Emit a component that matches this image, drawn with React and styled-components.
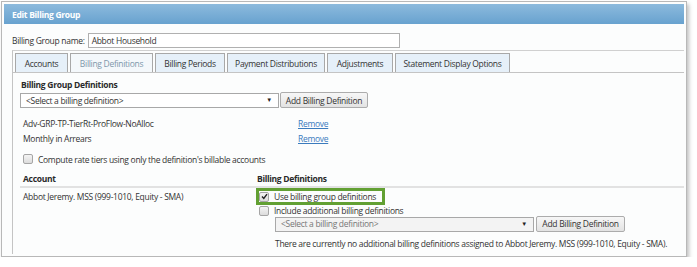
import React from 'react';
import styled, { createGlobalStyle } from 'styled-components';

const GlobalStyle = createGlobalStyle`
  body {
    margin: 0;
    background: #ffffff;
    font-family: "Open Sans", "Liberation Sans", sans-serif;
    font-size: 8.5px;
    letter-spacing: -0.3px;
    color: #333;
  }
`;

const Window = styled.div`
  margin: 1px 0 0 1px;
  width: 680px;
  height: 250px;
  padding: 2px;
  border: 1px solid #b8b8b8;
  background: #fcfdfd;
  box-shadow: 2px 3px 4px rgba(0, 0, 0, 0.25);
  display: flex;
  flex-direction: column;
  overflow: hidden;
`;

const Header = styled.div`
  flex-shrink: 0;
  height: 20px;
  display: flex;
  align-items: center;
  padding-left: 8px;
  color: #fff;
  font-weight: 700;
  background: linear-gradient(#8cbadd, #68a2cf);
`;

const Body = styled.div`
  flex: 1;
  padding: 8px 0 0 8px;
  display: flex;
  flex-direction: column;
`;

const NameRow = styled.div`
  flex-shrink: 0;
  display: flex;
  align-items: center;
  gap: 3px;
  height: 16px;
`;

const TextInput = styled.div`
  width: 307px;
  height: 13px;
  border: 1px solid #b0b0b0;
  background: #fff;
  padding-left: 3px;
  display: flex;
  align-items: center;
`;

const TabPanel = styled.div`
  margin-top: 2px;
  flex: 1;
  border-left: 1px solid #c4c4c4;
  border-top: 1px solid #d0d0d0;
  display: flex;
  flex-direction: column;
`;

const TabRow = styled.div`
  display: flex;
  gap: 2px;
  padding: 2px 0 0 2px;
  border-bottom: 1px solid #c4c4c4;
`;

const Tab = styled.div`
  width: ${p => p.$width}px;
  height: 19px;
  box-sizing: border-box;
  display: flex;
  align-items: center;
  justify-content: center;
  border: 1px solid #a8a8a8;
  border-bottom: none;
  background: ${p => (p.$active ? '#f4f8fb' : '#e6f0f9')};
  color: ${p => (p.$active ? '#7e97aa' : '#333')};
`;

const Content = styled.div`
  padding: 6px 0 0 7px;
  display: flex;
  flex-direction: column;
`;

const SectionTitle = styled.div`
  font-weight: 700;
  color: #2a2a2a;
  height: 12px;
  line-height: 12px;
  padding-left: 1px;
`;

const PickerRow = styled.div`
  display: flex;
  align-items: center;
  gap: ${p => p.$gap}px;
  margin: ${p => p.$margin || '0'};
`;

const Select = styled.div`
  width: 259px;
  height: 15px;
  box-sizing: border-box;
  border: 1px solid #a8a8a8;
  background: ${p => (p.$disabled ? '#f3f3f3' : '#fff')};
  padding: 0 6px 0 5px;
  display: flex;
  align-items: center;
  justify-content: space-between;
  color: ${p => (p.$disabled ? '#777' : '#333')};

  span.arrow {
    font-size: 6px;
    color: #222;
  }
`;

const Button = styled.div`
  width: ${p => p.$width}px;
  height: 16px;
  box-sizing: border-box;
  border: 1px solid #acacac;
  border-radius: 2px;
  background: linear-gradient(#f7f7f7, #e3e3e3);
  display: flex;
  align-items: center;
  justify-content: center;
  color: #333;
`;

const DefList = styled.div`
  margin-top: 9px;
  display: flex;
  flex-direction: column;
  gap: 3px;
  padding-left: 3px;
`;

const DefRow = styled.div`
  display: grid;
  grid-template-columns: 275px auto;
  height: 12px;
  align-items: center;
`;

const Link = styled.span`
  color: #3b7bbd;
  text-decoration: underline;
`;

const CheckLine = styled.label`
  display: flex;
  align-items: center;
  gap: 5px;
  height: ${p => p.$height || 12}px;
  margin-left: ${p => p.$indent || 0}px;
  color: #333;
`;

const Box = styled.span`
  width: 8px;
  height: 8px;
  border: 1px solid #a5a5a5;
  border-radius: 2px;
  background: linear-gradient(#f4f4f4, #dcdcdc);
  display: flex;
  align-items: center;
  justify-content: center;
`;

const Grid = styled.div`
  margin-top: 8px;
  display: grid;
  grid-template-columns: 234px 1fr;
`;

const HeadCell = styled.div`
  font-weight: 700;
  color: #2a2a2a;
  height: 13px;
  line-height: 12px;
  padding-left: 3px;
  border-bottom: 2px solid #e2e2e2;
`;

const Cell = styled.div`
  padding: ${p => p.$pad || '0'};
  display: flex;
  flex-direction: column;
  line-height: 12px;
`;

const Highlight = styled.div`
  margin-left: 2px;
  padding: 0 6px 0 0;
  border: 3px solid #62a033;
  align-self: flex-start;
`;

const Note = styled.div`
  margin: 6px 0 0 21px;
  line-height: 12px;
  white-space: nowrap;
`;

const Check = ({ checked }) => (
  <Box>
    {checked && (
      <svg width="7" height="7" viewBox="0 0 7 7">
        <path d="M1 3.6 L2.8 5.4 L6 1.2" stroke="#222" strokeWidth="1.4" fill="none" />
      </svg>
    )}
  </Box>
);

const tabs = [
  { label: 'Accounts', width: 53 },
  { label: 'Billing Definitions', width: 83, active: true },
  { label: 'Billing Periods', width: 70 },
  { label: 'Payment Distributions', width: 98 },
  { label: 'Adjustments', width: 66 },
  { label: 'Statement Display Options', width: 115 },
];

const definitions = ['Adv-GRP-TP-TierRt-ProFlow-NoAlloc', 'Monthly in Arrears'];

export default function App() {
  return (
    <>
      <GlobalStyle />
      <Window>
        <Header>Edit Billing Group</Header>
        <Body>
          <NameRow>
            <span>Billing Group name:</span>
            <TextInput>Abbot Household</TextInput>
          </NameRow>
          <TabPanel>
            <TabRow>
              {tabs.map(t => (
                <Tab key={t.label} $width={t.width} $active={t.active}>
                  {t.label}
                </Tab>
              ))}
            </TabRow>
            <Content>
              <SectionTitle>Billing Group Definitions</SectionTitle>
              <PickerRow $margin="1px 0 0 0" $gap={1}>
                <Select>
                  <span>&lt;Select a billing definition&gt;</span>
                  <span className="arrow">▼</span>
                </Select>
                <Button $width={88}>Add Billing Definition</Button>
              </PickerRow>
              <DefList>
                {definitions.map(d => (
                  <DefRow key={d}>
                    <span>{d}</span>
                    <Link>Remove</Link>
                  </DefRow>
                ))}
              </DefList>
              <DefList>
                <CheckLine>
                  <Check />
                  Compute rate tiers using only the definition's billable accounts
                </CheckLine>
              </DefList>
              <Grid>
                <HeadCell>Account</HeadCell>
                <HeadCell>Billing Definitions</HeadCell>
                <Cell $pad="3px 0 0 3px">Abbot Jeremy. MSS (999-1010, Equity - SMA)</Cell>
                <Cell>
                  <Highlight>
                    <CheckLine $height={11}>
                      <Check checked />
                      Use billing group definitions
                    </CheckLine>
                  </Highlight>
                  <CheckLine $indent={5}>
                    <Check />
                    Include additional billing definitions
                  </CheckLine>
                  <PickerRow $margin="-1px 0 0 21px" $gap={2}>
                    <Select $disabled>
                      <span>&lt;Select a billing definition&gt;</span>
                      <span className="arrow">▼</span>
                    </Select>
                    <Button $width={89}>Add Billing Definition</Button>
                  </PickerRow>
                  <Note>
                    There are currently no additional billing definitions assigned to Abbot Jeremy. MSS (999-1010, Equity - SMA).
                  </Note>
                </Cell>
              </Grid>
            </Content>
          </TabPanel>
        </Body>
      </Window>
    </>
  );
}
